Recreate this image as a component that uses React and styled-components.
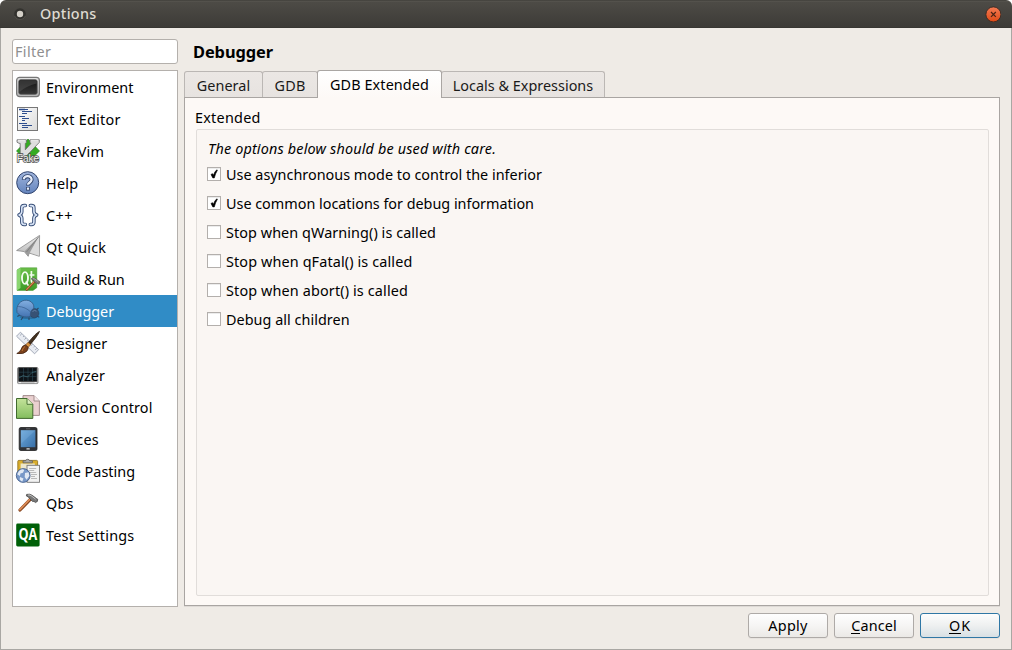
import React, { useLayoutEffect, useRef, useState } from "react";
import styled, { createGlobalStyle, css } from "styled-components";

const GlobalStyle = createGlobalStyle`
  * { box-sizing: border-box; }
  html, body { margin: 0; padding: 0; background: #fff; overflow: hidden; }
  body { font-family: "Noto Sans", "Open Sans", sans-serif; font-size: 14.4px; color: #000; }
`;

const Window = styled.div`
  width: 1012px;
  height: 650px;
  display: flex;
  flex-direction: column;
  background: #efebe6;
  border-radius: 6px 6px 0 0;
  overflow: hidden;
`;

const TitleBar = styled.header`
  height: 28px;
  flex: none;
  display: flex;
  align-items: center;
  padding: 0 11px 0 12px;
  color: #dfdbd2;
  background: linear-gradient(#33322e 0, #5a5852 1px, #4d4b46 2px, #3d3b37 27px, #33322e 28px);
`;

const TitleText = styled.div`
  flex: 1;
  padding: 0 0 1px 12px;
  font-weight: 500;
`;

const Body = styled.div`
  flex: 1;
  display: flex;
  flex-direction: column;
  border: 1px solid #a9a7a3;
  border-top: 0;
  padding: 11px;
`;

const Columns = styled.div`
  display: flex;
  gap: 6px;
  height: 568px;
`;

const Sidebar = styled.div`
  width: 166px;
  display: flex;
  flex-direction: column;
  gap: 6px;
`;

const FilterBox = styled.div`
  height: 25px;
  display: flex;
  align-items: center;
  padding: 0 0 1px 2px;
  color: #8f8f8f;
  background: #fff;
  border: 1px solid #b4b0ac;
  border-radius: 3px;
`;

const CategoryList = styled.div`
  flex: 1;
  background: #fff;
  border: 1px solid #b4b0ac;
`;

const CategoryRow = styled.div`
  height: 32px;
  display: flex;
  align-items: center;
  gap: 6px;
  padding-left: 3px;
  ${(p) => p.$selected && css`
    background: #308cc6;
    color: #fff;
  `}
  & > svg { flex: none; overflow: visible; }
`;

const Main = styled.main`
  flex: 1;
  display: flex;
  flex-direction: column;
  padding-bottom: 1px;
`;

const Heading = styled.h1`
  margin: 0;
  height: 31px;
  padding: 1px 0 0 9px;
  font-size: 16.4px;
  line-height: 24px;
  font-weight: 700;
`;

const TabBar = styled.div`
  display: flex;
  align-items: flex-end;
  height: 28px;
  margin-bottom: -1px;
`;

const Tab = styled.div`
  width: ${(p) => p.$width}px;
  height: ${(p) => (p.$active ? 28 : 26)}px;
  margin-bottom: ${(p) => (p.$active ? 0 : 1)}px;
  margin-right: -1px;
  z-index: ${(p) => (p.$active ? 2 : 0)};
  display: flex;
  justify-content: center;
  align-items: center;
  padding-top: ${(p) => (p.$active ? 0 : 2)}px;
  color: ${(p) => (p.$active ? "#000" : "#1b1a19")};
  background: ${(p) => (p.$active ? "linear-gradient(#fff, #fdf9f6)" : "linear-gradient(#ebe7e4, #e7e3e0)")};
  border: 1px solid ${(p) => (p.$active ? "#aaa6a3" : "#bbb7b4")};
  border-bottom: 0;
  border-radius: 3px 3px 0 0;
`;

const Pane = styled.section`
  flex: 1;
  display: flex;
  flex-direction: column;
  padding: 9px 10px 9px 11px;
  background: #fdf9f6;
  border: 1px solid #a9a5a2;
  box-shadow: 0 1px 0 #dedad6;
`;

const GroupTitle = styled.div`
  height: 22px;
  line-height: 21px;
  margin-left: -1px;
`;

const GroupFrame = styled.div`
  flex: 1;
  padding: 8px 10px;
  background: #faf6f3;
  border: 1px solid #e1ddda;
  border-radius: 2px;
`;

const Note = styled.div`
  height: 22px;
  line-height: 22px;
  padding-left: 1px;
  font-style: italic;
`;

const CheckRow = styled.label`
  height: 29px;
  display: flex;
  align-items: center;
  gap: 5px;
`;

const CheckBox = styled.span`
  width: 14px;
  height: 14px;
  flex: none;
  display: block;
  margin-bottom: 2px;
  background: #fff;
  border: 1px solid #b3afac;
  box-shadow: inset 0 1px 0 #ececec;
  & > svg { display: block; }
`;

const Buttons = styled.footer`
  display: flex;
  justify-content: flex-end;
  gap: 6px;
  padding-top: 6px;
`;

const Button = styled.div`
  width: 80px;
  height: 25px;
  display: flex;
  align-items: center;
  justify-content: center;
  background: ${(p) => (p.$primary ? "linear-gradient(#fdfdfd, #eef0f0 50%, #d8e0e4)" : "linear-gradient(#fefefe, #f6f5f4 50%, #ebe9e6)")};
  border: 1px solid ${(p) => (p.$primary ? "#2f77a5" : "#aeaaa7")};
  border-radius: 3px;
  box-shadow: 0 1px 0 #e7e3df;
`;

const Mnemonic = styled.span`
  border-bottom: 1px solid #000;
  display: inline-block;
  line-height: 15px;
`;

const TextSpan = styled.span`
  white-space: pre;
  display: inline-block;
`;

/* Tracks its text so that it takes the given width in whichever font is found. */
function Text({ width, children }) {
  const ref = useRef(null);
  const [spacing, setSpacing] = useState(0);
  useLayoutEffect(() => {
    const el = ref.current;
    const natural = el.getBoundingClientRect().width;
    setSpacing((width - natural) / el.textContent.length);
  }, [width]);
  return <TextSpan ref={ref} style={{ letterSpacing: spacing }}>{children}</TextSpan>;
}

const Icon = ({ children }) => (
  <svg width="24" height="24" viewBox="0 0 24 24">{children}</svg>
);

const Gradient = ({ id, from, to, x2 = 0, y2 = 1 }) => (
  <linearGradient id={id} x1="0" y1="0" x2={x2} y2={y2}>
    <stop offset="0" stopColor={from} />
    <stop offset="1" stopColor={to} />
  </linearGradient>
);

const EnvironmentIcon = () => (
  <Icon>
    <Gradient id="envOut" from="#e2e2e2" to="#b5b5b5" />
    <Gradient id="envIn" from="#111" to="#383838" />
    <rect x=".6" y="2.4" width="22.8" height="19.2" rx="3" fill="url(#envOut)" stroke="#777" strokeWidth="1.2" />
    <rect x="2.8" y="4.7" width="18.4" height="14.6" rx="1.8" fill="url(#envIn)" stroke="#555" strokeWidth=".8" />
    <path d="M3.5 5.3H20.5V8.5Q10 11 3.5 17Z" fill="#5b5b5b" opacity=".45" />
  </Icon>
);

const TextEditorIcon = () => (
  <Icon>
    <Gradient id="paper" from="#fff" to="#dadada" x2={1} />
    <rect x="1.5" y=".5" width="20" height="23" fill="url(#paper)" stroke="#777" />
    <path d="M3 2.5h9M6 4.5h10M6 6.5h5M3 9.5h6M6 11.5h7M6 13.5h3M3 16.5h8M6 18.5h10M6 20.5h6" stroke="#2e4e8e" strokeWidth="1.1" />
    <path d="M3 2.5h6" stroke="#2e4e8e" strokeWidth="1.6" />
  </Icon>
);

const VimIcon = () => (
  <Icon>
    <path d="M12 0 23.5 12 12 23.5 .5 12Z" fill="#35ab22" stroke="#1d7a12" strokeWidth=".6" />
    <path d="M1 .8H10.4V3.4L9.3 4.4V10.8L15 4.4 13.9 3.4V.8H23.3V3.4L8.5 19H4.2V4.4L3 4.3 1 3.2Z" fill="#dedede" stroke="#6a6a6a" strokeWidth=".8" />
    <path d="M2 1.6h7.5M14.8 1.6h7.6" stroke="#fff" strokeWidth=".7" />
    <text x=".8" y="22.8" fontSize="11" textLength="22.4" lengthAdjust="spacingAndGlyphs" fill="#f4f4f4" stroke="#4c4c4c" strokeWidth="1.5" paintOrder="stroke" fontFamily="Liberation Sans">Fake</text>
  </Icon>
);

const HelpIcon = () => (
  <Icon>
    <Gradient id="help" from="#9fb4dc" to="#6484bd" />
    <circle cx="11.7" cy="11.7" r="11" fill="url(#help)" stroke="#33466f" strokeWidth="1" />
    <path d="M7.8 8.8C7.8 4 15.8 4 15.6 8.8C15.5 11.4 12 11.6 12 14.4M12 16V19.4" fill="none" stroke="#2d4068" strokeWidth="4" />
    <path d="M7.8 8.3C7.8 4 15.8 4 15.6 8.8C15.5 11.4 12 11.6 12 13.8M12 16.6V18.8" fill="none" stroke="#e8eefa" strokeWidth="2.3" />
  </Icon>
);

const BRACES = "M9.4 2.6H8.2Q5.8 2.6 5.8 5V8.5Q5.8 11 3 12 5.8 13 5.8 15.5V19Q5.8 21.4 8.2 21.4H9.4M14.3 2.6H15.5Q17.9 2.6 17.9 5V8.5Q17.9 11 20.7 12 17.9 13 17.9 15.5V19Q17.9 21.4 15.5 21.4H14.3";
const CppIcon = () => (
  <Icon>
    <path d={BRACES} fill="none" stroke="#3a5079" strokeWidth="3.5" strokeLinejoin="round" strokeLinecap="round" />
    <path d={BRACES} fill="none" stroke="#d8e4f6" strokeWidth="1.6" strokeLinejoin="round" strokeLinecap="round" />
  </Icon>
);

const QuickIcon = () => (
  <Icon>
    <Gradient id="plane" from="#f0f0f0" to="#b4b4b4" />
    <path d="M23.6.4.6 15.5 8.3 16.6 12.2 21.3 13.2 18 23.3 21.3Z" fill="url(#plane)" stroke="#888" strokeWidth=".8" />
    <path d="M23.4.8 8.5 16.5 12.2 21 14 17Z" fill="#9b9b9b" />
    <path d="M23 1.5 14 17.8 23 20.8Z" fill="#dcdcdc" />
    <path d="M23 1.5 10.5 17" stroke="#777" strokeWidth=".7" />
  </Icon>
);

const Hammer = () => (
  <>
    <path d="M4 19 15 7.6" stroke="#85451f" strokeWidth="3.2" strokeLinecap="round" />
    <path d="M3.9 18.6 14.6 7.4" stroke="#dc8b56" strokeWidth="1.7" strokeLinecap="round" />
    <path d="M10.6 3.4Q13.8 2.6 16 4.2L20.6 7.6 21.7 8.2 21.4 10.4 19.4 11.6 18 10.4 16.6 10.5 13.6 7.6Q12.6 5.6 10.4 5Z" fill="#777" stroke="#3c3c3c" strokeWidth=".7" />
    <path d="M12 4Q14 3.8 15.8 5.2L19.6 8.2" fill="none" stroke="#c5c5c5" strokeWidth=".9" />
  </>
);

const BuildIcon = () => (
  <Icon>
    <Gradient id="build" from="#6cc04a" to="#3d9b27" />
    <path d="M1 3 4.5.8H20.8V20.7L17 23.4H1Z" fill="url(#build)" stroke="#3e962b" strokeWidth=".5" />
    <path d="M1 3 4.5.8V21L1 23.4Z" fill="#8ad570" />
    <ellipse cx="9" cy="11" rx="3" ry="5.9" fill="none" stroke="#f2fbee" strokeWidth="1.9" />
    <path d="M9.8 14.5 12.4 18.6M15.4 4V14Q15.4 16 17.6 15.4M13.6 8H18.4" fill="none" stroke="#f2fbee" strokeWidth="1.7" />
    <g transform="translate(7.8 8.6) scale(.74)"><Hammer /></g>
  </Icon>
);

const DebuggerIcon = () => (
  <Icon>
    <Gradient id="bug" from="#82aee0" to="#4474b2" />
    <path d="M4 16 1.3 17.5M7 18 5 21M13 18.5V21M20 11.5 22.5 9M21 17 23.3 18.2" stroke="#314865" strokeWidth="1.1" />
    <ellipse cx="12.5" cy="18" rx="9" ry="2" fill="#233d5b" opacity=".35" />
    <circle cx="18.3" cy="14.2" r="4.6" fill="#375275" stroke="#283f5e" strokeWidth=".6" />
    <path d="M1 13.5C-.2 5.5 5 1 10.3 1.2C15.7 1.4 18.8 6 17.6 9.5C14.8 10.8 14 14 14.4 17.4C9 19 3.7 17.2 1 13.5Z" fill="url(#bug)" stroke="#34577f" strokeWidth=".8" />
    <path d="M2.2 7.5Q9.5 7.8 14.7 13" fill="none" stroke="#345c8d" strokeWidth=".7" />
    <path d="M16.5 12.5Q18.5 10.5 20.5 12.2" fill="none" stroke="#6d8db3" strokeWidth=".8" />
  </Icon>
);

const DesignerIcon = () => (
  <Icon>
    <path d="M4.4 1.2 22.6 18.6 18.6 22.8.5 5.2Z" fill="#e8ebf1" stroke="#9299a9" strokeWidth=".8" />
    <path d="M5.8 2.8 4 4.5M8 5 7 6M10 7 8.4 8.6M12.2 9 11.2 10M16.5 13.2 15 14.8M18.7 15.2 17.6 16.3M20.8 17.3 19.2 19" stroke="#8a93a5" strokeWidth=".7" />
    <path d="M23.5.4Q20 1.8 12.3 11.5L14.3 13.4Q21.5 5.2 23.5.4Z" fill="#43301e" stroke="#2b1d12" strokeWidth=".8" />
    <path d="M12 11.3 9.5 14 12.2 16.4 14.6 13.6Z" fill="#d9913c" stroke="#6b3b13" strokeWidth=".6" />
    <path d="M9.5 14Q6.3 14 5 18.5 4 20.8.8 22.5 7.6 23.5 10.5 20.5 12.3 18.7 12.2 16.4Z" fill="#7a401b" stroke="#361807" strokeWidth=".7" />
    <path d="M9 15.5Q7 16.5 6.1 20" fill="none" stroke="#c27937" strokeWidth="1" />
  </Icon>
);

const AnalyzerIcon = () => (
  <Icon>
    <rect x="1.5" y="4.6" width="20.5" height="16" rx="1" fill="#c4c4c4" stroke="#777" strokeWidth=".8" />
    <rect x="2.8" y="4.9" width="18" height="13.4" fill="#0e1318" stroke="#222" strokeWidth=".7" />
    <path d="M3 9.2H20.5M3 13.6H20.5M7.5 5V18M12 5V18M16.5 5V18" stroke="#2c4a55" strokeWidth=".6" />
    <path d="M3 15 7 12.5 11.5 14 16 9.5 20.5 8.2" fill="none" stroke="#437582" strokeWidth=".6" />
    <path d="M3 19.6h2M18.5 19.6h2" stroke="#eee" strokeWidth="1" />
  </Icon>
);

const VersionIcon = () => (
  <Icon>
    <Gradient id="green" from="#c4e39b" to="#83bd5d" />
    <path d="M7 .6H18L23.4 6V20.4H7Z" fill="#ead0d0" stroke="#9b8585" strokeWidth=".9" />
    <path d="M18 .6V6H23.4" fill="#f6e9e9" stroke="#9b8585" strokeWidth=".9" />
    <path d="M.5 3.5H11L16.8 9.3V23.4H.5Z" fill="url(#green)" stroke="#416a2e" strokeWidth="1" />
    <path d="M11 3.5V9.3H16.8" fill="#d9efbf" stroke="#416a2e" strokeWidth=".9" />
  </Icon>
);

const DevicesIcon = () => (
  <Icon>
    <Gradient id="screen" from="#6ea9dc" to="#376fa8" x2={1} />
    <rect x="3.2" y=".5" width="17.8" height="23" rx="1.6" fill="#303237" stroke="#222" strokeWidth=".8" />
    <rect x="4.8" y="3.2" width="14.6" height="17" fill="url(#screen)" />
    <path d="M4.8 3.2H19.4L4.8 17Z" fill="#8fc0e8" opacity=".25" />
    <path d="M10 1.8h4.2" stroke="#777" strokeWidth=".7" />
    <rect x="10.4" y="21.2" width="3.4" height="1.3" rx=".5" fill="#ddd" />
  </Icon>
);

const PastingIcon = () => (
  <Icon>
    <rect x="1.8" y="1.4" width="19.8" height="16" rx="1" fill="#d9ad2c" stroke="#8a6b16" strokeWidth=".8" />
    <rect x="4.6" y="4.5" width="14.2" height="12" fill="#eee8cc" />
    <path d="M7 3.8V1.8H9.6Q9.8.3 11.6.3T13.6 1.8H16.4V3.8Z" fill="#aaa" stroke="#555" strokeWidth=".7" />
    <rect x="11" y="6.3" width="12.5" height="17" fill="#f2f2f2" stroke="#777" strokeWidth=".9" />
    <path d="M13.2 9.5h7M13.2 11.5h5M13.2 13.5h7M15 15.5h6M15 17.5h4M15 19.5h6" stroke="#aaa" strokeWidth=".8" />
    <circle cx="7.2" cy="16.5" r="6.9" fill="#7898c8" stroke="#3c5583" strokeWidth=".8" />
    <path d="M3 12Q6 9.2 8.2 11L7 13.8 4.4 14.6 4 17 1.2 15.2ZM9 14 12.6 13.2 13.4 17 10.5 20.8 8.7 18ZM4 18 7.5 19.5 6.2 22.7 3.7 20.7Z" fill="#e1e9f4" />
  </Icon>
);

const QbsIcon = () => <Icon><Hammer /></Icon>;

const TestIcon = () => (
  <Icon>
    <rect x=".2" y=".5" width="23.4" height="23" rx="1.4" fill="#006008" />
    <text x="2.4" y="16.8" fontSize="16.5" fontWeight="700" textLength="18.8" lengthAdjust="spacingAndGlyphs" fill="#fff" fontFamily="Open Sans, Noto Sans, sans-serif">QA</text>
  </Icon>
);

const CATEGORIES = [
  ["Environment", 87.6, EnvironmentIcon],
  ["Text Editor", 74.6, TextEditorIcon],
  ["FakeVim", 58, VimIcon],
  ["Help", 32.4, HelpIcon],
  ["C++", 27, CppIcon],
  ["Qt Quick", 60.2, QuickIcon],
  ["Build & Run", 78.6, BuildIcon],
  ["Debugger", 68.2, DebuggerIcon],
  ["Designer", 61.2, DesignerIcon],
  ["Analyzer", 59.2, AnalyzerIcon],
  ["Version Control", 106.6, VersionIcon],
  ["Devices", 53, DevicesIcon],
  ["Code Pasting", 89, PastingIcon],
  ["Qbs", 27.6, QbsIcon],
  ["Test Settings", 88.4, TestIcon],
];

const TABS = [
  ["General", 79, 53.6],
  ["GDB", 56, 31],
  ["GDB Extended", 125, 99],
  ["Locals & Expressions", 164, 140.4],
];

const OPTIONS = [
  ["Use asynchronous mode to control the inferior", 316, true],
  ["Use common locations for debug information", 308, true],
  ["Stop when qWarning() is called", 210, false],
  ["Stop when qFatal() is called", 186.4, false],
  ["Stop when abort() is called", 182, false],
  ["Debug all children", 123.6, false],
];

export default function App() {
  return (
    <>
      <GlobalStyle />
      <Window>
        <TitleBar>
          <svg width="16" height="16" viewBox="0 0 16 16">
            <circle cx="8" cy="8" r="5.8" fill="#33322e" />
            <path d="M2.6 10A5.8 5.8 0 0 0 13.4 10" fill="none" stroke="#5b5953" strokeWidth=".7" />
            <circle cx="8" cy="8" r="3.2" fill="#d4d0c8" />
          </svg>
          <TitleText><Text width={56.6}>Options</Text></TitleText>
          <svg width="16" height="16" viewBox="0 0 16 16">
            <Gradient id="close" from="#f47b54" to="#df4a16" />
            <circle cx="8.4" cy="8.4" r="7.5" fill="url(#close)" stroke="#33251e" strokeWidth=".8" />
            <path d="M6 6 10.8 10.8M10.8 6 6 10.8" stroke="#4b2415" strokeWidth="1.2" />
          </svg>
        </TitleBar>
        <Body>
          <Columns>
            <Sidebar>
              <FilterBox><Text width={36.4}>Filter</Text></FilterBox>
              <CategoryList>
                {CATEGORIES.map(([name, width, Glyph]) => (
                  <CategoryRow key={name} $selected={name === "Debugger"}>
                    <Glyph />
                    <Text width={width}>{name}</Text>
                  </CategoryRow>
                ))}
              </CategoryList>
            </Sidebar>
            <Main>
              <Heading><Text width={80}>Debugger</Text></Heading>
              <TabBar>
                {TABS.map(([name, tabWidth, width]) => (
                  <Tab key={name} $width={tabWidth} $active={name === "GDB Extended"}>
                    <Text width={width}>{name}</Text>
                  </Tab>
                ))}
              </TabBar>
              <Pane>
                <GroupTitle><Text width={65.6}>Extended</Text></GroupTitle>
                <GroupFrame>
                  <Note><Text width={288}>The options below should be used with care.</Text></Note>
                  {OPTIONS.map(([name, width, checked]) => (
                    <CheckRow key={name}>
                      <CheckBox>
                        {checked && (
                          <svg width="12" height="12" viewBox="0 0 12 12">
                            <path d="M3 6.4 4.6 5.7 5.4 7.2Q6.6 3.6 8.8 1.8L9.4 2.2Q7.4 5.4 6.3 9.9H4.8Z" fill="#000" stroke="#000" strokeWidth=".6" />
                          </svg>
                        )}
                      </CheckBox>
                      <Text width={width}>{name}</Text>
                    </CheckRow>
                  ))}
                </GroupFrame>
              </Pane>
            </Main>
          </Columns>
          <Buttons>
            <Button><Text width={39.4}>Apply</Text></Button>
            <Button><Text width={45.6}><Mnemonic>C</Mnemonic>ancel</Text></Button>
            <Button $primary><Text width={22}><Mnemonic>O</Mnemonic>K</Text></Button>
          </Buttons>
        </Body>
      </Window>
    </>
  );
}
